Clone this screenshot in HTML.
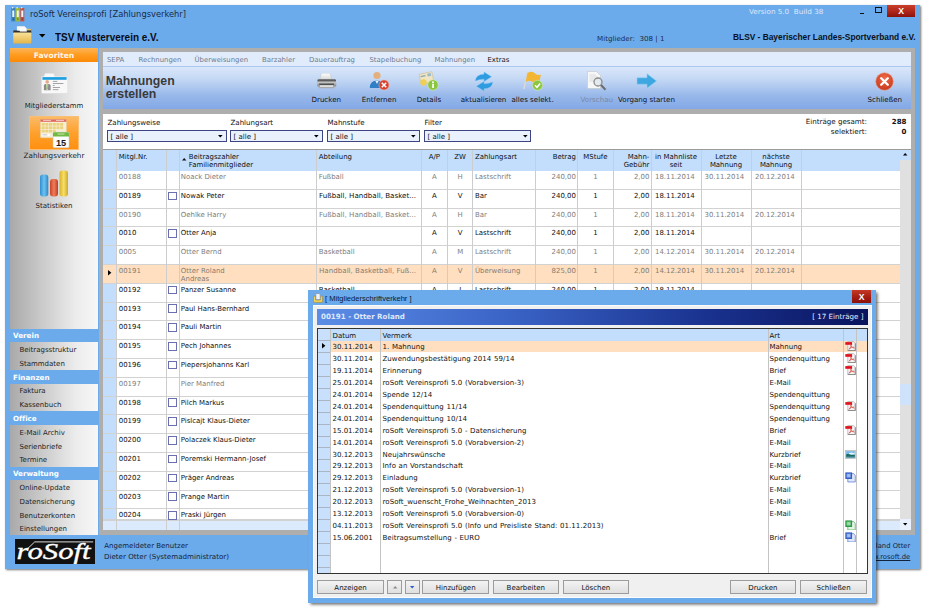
<!DOCTYPE html>
<html lang="de"><head><meta charset="utf-8"><title>roSoft Vereinsprofi [Zahlungsverkehr]</title>
<style>
html,body{margin:0;padding:0;background:#fff;}
body{width:926px;height:610px;position:relative;overflow:hidden;font-family:'DejaVu Sans','Liberation Sans',sans-serif;font-size:7.2px;color:#111;}
div,span{box-sizing:border-box;}
.abs{position:absolute;white-space:pre;}
#win{position:absolute;left:5px;top:5px;width:915.4px;height:563.6px;background:#6babeb;box-shadow:1px 1px 2px rgba(0,0,0,.55);}
.t{position:absolute;white-space:pre;line-height:1;font-variant-ligatures:none;}
.side{position:absolute;left:10px;top:48px;width:88px;height:487px;background:linear-gradient(90deg,#a9a9a9 0%,#c9c9c9 35%,#ececec 75%,#f7f7f7 100%);}
.shdr{position:absolute;left:10px;width:88px;background:#6babeb;color:#fff;font-weight:bold;font-size:7.6px;padding-left:3px;white-space:pre;}
.sitem{position:absolute;left:19px;font-size:7.2px;color:#222;white-space:pre;line-height:1;}
.cell{position:absolute;white-space:pre;overflow:hidden;line-height:1;}
</style></head>
<body>
<div id="win"></div>
<svg class="abs" style="left:11px;top:7px" width="14" height="15" viewBox="0 0 14 15">
<rect x="0.3" y="1" width="4" height="13.4" fill="#3b82bd"/><rect x="1.3" y="3.5" width="2" height="6.5" fill="#f4f4f4"/><rect x="1" y="0" width="1.2" height="1.4" fill="#e8f0f8"/>
<rect x="4.8" y="1" width="4" height="13.4" fill="#9ab93a"/><rect x="5.8" y="3.5" width="2" height="6.5" fill="#f4f4f4"/><rect x="5.5" y="0" width="1.2" height="1.4" fill="#e8f0f8"/>
<rect x="9.3" y="1" width="4" height="13.4" fill="#c9503a"/><rect x="10.3" y="3.5" width="2" height="6.5" fill="#f4f4f4"/><rect x="10" y="0" width="1.2" height="1.4" fill="#e8f0f8"/>
<circle cx="2.3" cy="12" r="0.6" fill="#234"/><circle cx="6.8" cy="12" r="0.6" fill="#342"/><circle cx="11.3" cy="12" r="0.6" fill="#422"/>
</svg>
<div class="t" style="left:30px;top:10.20px;font-size:8.0px;color:#1a2a44;line-height:9.60px;transform:scaleX(1.0389);transform-origin:left center;">roSoft Vereinsprofi [Zahlungsverkehr]</div>
<div class="t" style="left:749px;top:8.30px;font-size:7.0px;color:#dbe9fb;line-height:8.40px;transform:scaleX(1.0282);transform-origin:left center;">Version 5.0  Build 38</div>
<div class="abs" style="left:859.8px;top:12.9px;width:4.6px;height:1.5px;background:#111;"></div>
<div class="abs" style="left:875px;top:7px;width:7px;height:6px;background:transparent;border:1px solid #111;border-top-width:1.6px;"></div>
<div class="abs" style="left:887px;top:5px;width:28px;height:12px;background:linear-gradient(#c8402a,#b52a1c 45%,#8c120c);"></div>
<div class="t" style="left:887px;top:6.04px;font-size:8.6px;color:#fff;line-height:10.32px;font-weight:bold;font-family:'Liberation Sans',sans-serif;width:28px;text-align:center;">X</div>
<svg class="abs" style="left:12.5px;top:26px" width="19" height="18" viewBox="0 0 19 18">
<defs><linearGradient id="fg" x1="0" y1="0" x2="0" y2="1"><stop offset="0" stop-color="#f8e29a"/><stop offset="1" stop-color="#e6b54a"/></linearGradient></defs>
<rect x="13.6" y="2.8" width="4.2" height="3" fill="#e8c058"/>
<path d="M0.4 4.4 H18.2 V7.2 H0.4Z" fill="#2e2e2e"/>
<path d="M4 0.3 H11.4 L13.7 2.6 V5.6 H7.2 L6.2 4.4 H4Z" fill="#fbfbfb" stroke="#dcdcdc" stroke-width="0.3"/>
<rect x="0.3" y="6.4" width="18" height="11" rx="0.8" fill="url(#fg)"/>
</svg>
<svg class="abs" style="left:39px;top:33.9px" width="7" height="4" viewBox="0 0 7 4"><path d="M0 0H6.4L3.2 3.4Z" fill="#000"/></svg>
<div class="t" style="left:54.7px;top:29.68px;font-size:11.7px;color:#0a0a12;line-height:14.04px;font-weight:bold;font-family:'Liberation Sans',sans-serif;transform:scaleX(0.8504);transform-origin:left center;">TSV Musterverein e.V.</div>
<div class="t" style="left:596.7px;top:34.96px;font-size:6.9px;color:#1c2d4a;line-height:8.28px;transform:scaleX(1.0340);transform-origin:left center;">Mitglieder:  308 | 1</div>
<div class="t" style="left:732.8px;top:32.18px;font-size:8.7px;color:#0a1020;line-height:10.44px;font-weight:bold;font-family:'Liberation Sans',sans-serif;transform:scaleX(0.9610);transform-origin:left center;">BLSV - Bayerischer Landes-Sportverband e.V.</div>
<div class="side"></div>
<div class="abs" style="left:10px;top:48px;width:88px;height:13.5px;background:linear-gradient(#fbb558,#ff9b1e 50%,#fb8a07);"></div>
<div class="t" style="left:10px;top:50.64px;font-size:7.6px;color:#fff6e6;line-height:9.12px;font-weight:bold;width:88px;text-align:center;">Favoriten</div>
<svg class="abs" style="left:40.5px;top:73px" width="27.5" height="21" viewBox="0 0 27.5 21">
<path d="M0.4 4.6 Q0.4 3.3 1.7 3.3 L3 3.3 L3.6 0.9 Q3.8 0.2 4.6 0.2 L12.2 0.2 Q13 0.2 13.2 0.9 L13.8 3.3 L25.5 3.3 Q26.8 3.3 26.8 4.6 L26.8 19.3 Q26.8 20.6 25.5 20.6 L1.7 20.6 Q0.4 20.6 0.4 19.3Z" fill="#f8f8f8" stroke="#d4d4d4" stroke-width="0.5"/>
<rect x="1.4" y="4.1" width="24.2" height="2.7" fill="#1f9fe0"/>
<circle cx="6.2" cy="8.9" r="1.8" fill="#eaa88a"/>
<path d="M2.9 17.2 V12.6 Q2.9 10.9 4.6 10.9 H7.8 Q9.6 10.9 9.6 12.6 V17.2Z" fill="#8c8c8c"/>
<path d="M5.2 10.9 H7.2 L6.9 16.8 H5.5Z" fill="#f4f4f4"/>
<path d="M5.7 11.1 H6.7 L6.9 15.4 L6.2 16.4 L5.5 15.4Z" fill="#8cc63f"/>
<g fill="#8f8f8f"><rect x="11.8" y="7.9" width="4.5" height="0.8"/><rect x="11.8" y="10" width="10.6" height="0.8"/><rect x="11.8" y="12.1" width="1.8" height="0.8"/><rect x="11.8" y="14.1" width="7.2" height="0.8"/><rect x="11.8" y="16.3" width="5.6" height="0.8"/></g>
</svg>
<div class="t" style="left:10px;top:101.50px;font-size:7.0px;color:#222;line-height:8.40px;width:88px;text-align:center;transform:scaleX(0.9877);transform-origin:center center;">Mitgliederstamm</div>
<div class="abs" style="left:29.4px;top:116.3px;width:49.4px;height:33.7px;background:linear-gradient(#fbba66,#ffa02c 50%,#ff9010);border:1px solid #f9bd74;"></div>
<svg class="abs" style="left:39.5px;top:119.2px" width="30" height="30" viewBox="0 0 30 30">
<rect x="0.4" y="0.4" width="26" height="18.4" rx="0.8" fill="#f6efd6" stroke="#dccfa6" stroke-width="0.5"/>
<rect x="0.4" y="0.4" width="26" height="2.4" fill="#e0695a"/>
<rect x="3" y="0.9" width="8" height="1" fill="#f5c9c0"/><rect x="16" y="0.9" width="8" height="1" fill="#f5c9c0"/>
<g fill="#ecd27c">
<rect x="1.6" y="4" width="3.1" height="2.7"/><rect x="5.3" y="4" width="3.1" height="2.7"/><rect x="9" y="4" width="3.1" height="2.7"/><rect x="12.7" y="4" width="3.1" height="2.7"/><rect x="16.4" y="4" width="3.1" height="2.7"/><rect x="20.1" y="4" width="3.1" height="2.7"/>
<rect x="1.6" y="7.4" width="3.1" height="2.7"/><rect x="5.3" y="7.4" width="3.1" height="2.7"/><rect x="9" y="7.4" width="3.1" height="2.7"/><rect x="12.7" y="7.4" width="3.1" height="2.7"/><rect x="16.4" y="7.4" width="3.1" height="2.7"/><rect x="20.1" y="7.4" width="3.1" height="2.7"/>
<rect x="1.6" y="10.8" width="3.1" height="2.7"/><rect x="5.3" y="10.8" width="3.1" height="2.7"/><rect x="9" y="10.8" width="3.1" height="2.7"/><rect x="12.7" y="10.8" width="3.1" height="2.7"/>
</g>
<rect x="1.6" y="14.8" width="8" height="2.2" fill="#fff"/><rect x="2.4" y="15.6" width="5" height="0.6" fill="#999"/>
<rect x="13" y="13.3" width="16" height="15.4" rx="1.2" fill="#fdfdfd" stroke="#c4c4c4" stroke-width="0.5"/>
<path d="M13 17.6 V14.5 Q13 13.3 14.2 13.3 H27.8 Q29 13.3 29 14.5 V17.6Z" fill="#72b944"/>
<rect x="17.5" y="14.6" width="7" height="0.9" fill="#cfe8b8"/>
<text x="21" y="26.6" font-family="Liberation Sans, sans-serif" font-weight="bold" font-size="9.2" text-anchor="middle" fill="#1a1a1a">15</text>
</svg>
<div class="t" style="left:5.5px;top:151.68px;font-size:7.2px;color:#222;line-height:8.64px;width:96px;text-align:center;transform:scaleX(1.0003);transform-origin:center center;">Zahlungsverkehr</div>
<svg class="abs" style="left:38px;top:170px" width="32" height="27" viewBox="0 0 32 27">
<defs>
<linearGradient id="b1" x1="0" x2="1"><stop offset="0" stop-color="#2f8fd0"/><stop offset=".5" stop-color="#6cc3f1"/><stop offset="1" stop-color="#2f86c8"/></linearGradient>
<linearGradient id="b2" x1="0" x2="1"><stop offset="0" stop-color="#c9442a"/><stop offset=".5" stop-color="#ef7e58"/><stop offset="1" stop-color="#c23a22"/></linearGradient>
<linearGradient id="b3" x1="0" x2="1"><stop offset="0" stop-color="#d9b22a"/><stop offset=".5" stop-color="#f6df6a"/><stop offset="1" stop-color="#d2a820"/></linearGradient>
</defs>
<rect x="2" y="4.6" width="8.3" height="21.9" rx="3" fill="url(#b1)"/>
<rect x="12" y="9" width="8" height="17.5" rx="3" fill="url(#b2)"/>
<rect x="21.5" y="0.4" width="8.5" height="26.1" rx="3" fill="url(#b3)"/>
</svg>
<div class="t" style="left:10px;top:201.50px;font-size:7.0px;color:#222;line-height:8.40px;width:88px;text-align:center;">Statistiken</div>
<div class="abs" style="left:5px;top:328.5px;width:93px;height:13.8px;background:#6babeb;"></div>
<div class="t" style="left:13.3px;top:332.44px;font-size:7.1px;color:#fff;line-height:8.52px;font-weight:bold;transform:scaleX(1.0109);transform-origin:left center;">Verein</div>
<div class="t" style="left:19.5px;top:345.90px;font-size:7.0px;color:#1e1e1e;line-height:8.40px;">Beitragsstruktur</div>
<div class="t" style="left:19.5px;top:359.70px;font-size:7.0px;color:#1e1e1e;line-height:8.40px;">Stammdaten</div>
<div class="abs" style="left:5px;top:369.9px;width:93px;height:13.8px;background:#6babeb;"></div>
<div class="t" style="left:13.3px;top:373.84px;font-size:7.1px;color:#fff;line-height:8.52px;font-weight:bold;transform:scaleX(1.0123);transform-origin:left center;">Finanzen</div>
<div class="t" style="left:19.5px;top:387.30px;font-size:7.0px;color:#1e1e1e;line-height:8.40px;">Faktura</div>
<div class="t" style="left:19.5px;top:401.10px;font-size:7.0px;color:#1e1e1e;line-height:8.40px;">Kassenbuch</div>
<div class="abs" style="left:5px;top:411.3px;width:93px;height:13.8px;background:#6babeb;"></div>
<div class="t" style="left:13.3px;top:415.24px;font-size:7.1px;color:#fff;line-height:8.52px;font-weight:bold;transform:scaleX(0.9976);transform-origin:left center;">Office</div>
<div class="t" style="left:19.5px;top:428.70px;font-size:7.0px;color:#1e1e1e;line-height:8.40px;">E-Mail Archiv</div>
<div class="t" style="left:19.5px;top:442.50px;font-size:7.0px;color:#1e1e1e;line-height:8.40px;">Serienbriefe</div>
<div class="t" style="left:19.5px;top:456.30px;font-size:7.0px;color:#1e1e1e;line-height:8.40px;">Termine</div>
<div class="abs" style="left:5px;top:466.5px;width:93px;height:13.8px;background:#6babeb;"></div>
<div class="t" style="left:13.3px;top:470.44px;font-size:7.1px;color:#fff;line-height:8.52px;font-weight:bold;transform:scaleX(1.0008);transform-origin:left center;">Verwaltung</div>
<div class="t" style="left:19.5px;top:483.90px;font-size:7.0px;color:#1e1e1e;line-height:8.40px;">Online-Update</div>
<div class="t" style="left:19.5px;top:497.70px;font-size:7.0px;color:#1e1e1e;line-height:8.40px;">Datensicherung</div>
<div class="t" style="left:19.5px;top:511.50px;font-size:7.0px;color:#1e1e1e;line-height:8.40px;">Benutzerkonten</div>
<div class="t" style="left:19.5px;top:525.30px;font-size:7.0px;color:#1e1e1e;line-height:8.40px;">Einstellungen</div>
<div class="abs" style="left:99px;top:48px;width:816px;height:487.4px;background:#aeaeae;"></div>
<div class="abs" style="left:102.5px;top:52px;width:808px;height:14.8px;background:#e0ecfb;border-bottom:1px solid #a9c7f1;"></div>
<div class="t" style="left:107px;top:56.06px;font-size:6.9px;color:#6d7b90;line-height:8.28px;">SEPA</div>
<div class="t" style="left:138.5px;top:56.06px;font-size:6.9px;color:#6d7b90;line-height:8.28px;">Rechnungen</div>
<div class="t" style="left:194.5px;top:56.06px;font-size:6.9px;color:#6d7b90;line-height:8.28px;">Überweisungen</div>
<div class="t" style="left:262px;top:56.06px;font-size:6.9px;color:#6d7b90;line-height:8.28px;">Barzahler</div>
<div class="t" style="left:309px;top:56.06px;font-size:6.9px;color:#6d7b90;line-height:8.28px;">Dauerauftrag</div>
<div class="t" style="left:369.5px;top:56.06px;font-size:6.9px;color:#6d7b90;line-height:8.28px;">Stapelbuchung</div>
<div class="t" style="left:434.5px;top:56.06px;font-size:6.9px;color:#6d7b90;line-height:8.28px;">Mahnungen</div>
<div class="t" style="left:487.5px;top:56.06px;font-size:6.9px;color:#111;line-height:8.28px;">Extras</div>
<div class="abs" style="left:102.5px;top:66.8px;width:808px;height:41.9px;background:linear-gradient(#dae7fa 0%,#c3d7f4 30%,#98b8ea 68%,#82a8e5 100%);"></div>
<div class="t" style="left:105.7px;top:73.72px;font-size:12.3px;color:#3a3a3a;line-height:14.76px;font-weight:bold;font-family:'Liberation Sans',sans-serif;">Mahnungen</div>
<div class="t" style="left:105.7px;top:87.32px;font-size:12.3px;color:#3a3a3a;line-height:14.76px;font-weight:bold;font-family:'Liberation Sans',sans-serif;">erstellen</div>
<svg class="abs" style="left:317px;top:73px" width="20" height="16" viewBox="0 0 20 16">
<defs><linearGradient id="pg" x1="0" y1="0" x2="0" y2="1"><stop offset="0" stop-color="#d2d2d2"/><stop offset="1" stop-color="#858585"/></linearGradient>
<linearGradient id="pp" x1="0" y1="0" x2="0" y2="1"><stop offset="0" stop-color="#ffffff"/><stop offset="1" stop-color="#d4d4d4"/></linearGradient></defs>
<path d="M4.4 0.3 H13 L14.8 6.8 H2.8Z" fill="url(#pp)" stroke="#bdbdbd" stroke-width="0.4"/>
<rect x="0.4" y="6.2" width="18.6" height="3" rx="1.2" fill="#5c5c5c"/>
<rect x="0.1" y="8.4" width="19.2" height="5.2" rx="1" fill="url(#pg)"/>
<rect x="2.2" y="10.6" width="14.8" height="1.2" fill="#3e3e3e"/>
<path d="M2 12.6 H17 L17.6 15.3 H1.4Z" fill="#a9a9a9"/>
<rect x="3" y="12.3" width="13" height="1.6" fill="#e4e4e4"/>
</svg>
<div class="t" style="left:311.5px;top:95.94px;font-size:7.1px;color:#111;line-height:8.52px;">Drucken</div>
<svg class="abs" style="left:369px;top:71px" width="22" height="20" viewBox="0 0 22 20">
<circle cx="8" cy="4.5" r="3.6" fill="#e3b07c"/>
<path d="M0.8 17 Q0.8 9.5 8 9.5 Q15.2 9.5 15.2 17Z" fill="#2f7fc7"/>
<path d="M6.3 9.7 L8 13 L9.7 9.7Z" fill="#f2f2f2"/>
<circle cx="15" cy="14" r="5" fill="#d9412b" stroke="#f1b0a0" stroke-width="0.6"/>
<path d="M12.8 11.8 L17.2 16.2 M17.2 11.8 L12.8 16.2" stroke="#fff" stroke-width="1.6"/>
</svg>
<div class="t" style="left:361.7px;top:95.94px;font-size:7.1px;color:#111;line-height:8.52px;">Entfernen</div>
<svg class="abs" style="left:418px;top:71px" width="22" height="20" viewBox="0 0 22 20">
<rect x="2" y="2" width="13" height="10" transform="rotate(-12 8 7)" fill="#efe4c4" stroke="#c9b98c" stroke-width="0.5"/>
<rect x="3" y="4" width="5" height="1.2" transform="rotate(-12 8 7)" fill="#8aa"/>
<rect x="10" y="3" width="3.6" height="3" transform="rotate(-12 8 7)" fill="#9bc"/>
<circle cx="5.5" cy="11.5" r="3.2" fill="#f0cf55"/>
<circle cx="15" cy="14" r="5.2" fill="#8cc63f" stroke="#d7edb2" stroke-width="0.6"/>
<rect x="14.2" y="12.8" width="1.7" height="4.2" fill="#fff"/><circle cx="15" cy="11.2" r="1" fill="#fff"/>
</svg>
<div class="t" style="left:416.7px;top:95.94px;font-size:7.1px;color:#111;line-height:8.52px;">Details</div>
<svg class="abs" style="left:474px;top:72px" width="20" height="19" viewBox="0 0 20 19">
<path d="M1.2 9 Q2 2.2 10 2.2 L10 0 L17.5 4.8 L10 9.6 L10 7.2 Q5.5 7 1.2 9Z" fill="#2f9be0" stroke="#7cc4f0" stroke-width="0.4"/>
<path d="M18.8 10 Q18 16.8 10 16.8 L10 19 L2.5 14.2 L10 9.4 L10 11.8 Q14.5 12 18.8 10Z" fill="#2f9be0" stroke="#7cc4f0" stroke-width="0.4"/>
</svg>
<div class="t" style="left:460.7px;top:95.94px;font-size:7.1px;color:#111;line-height:8.52px;">aktualisieren</div>
<svg class="abs" style="left:522px;top:71px" width="22" height="20" viewBox="0 0 22 20">
<path d="M5.5 1.5 L1.8 18" stroke="#d8d8d8" stroke-width="1.6"/>
<path d="M5.5 2 Q10 -0.5 13 2.5 Q16 5 19 3.5 L17 12 Q13.5 13.5 10.5 11 Q7.5 8.5 3.6 11Z" fill="#f2b534"/>
<circle cx="15.5" cy="14.3" r="5" fill="#8cc63f" stroke="#d7edb2" stroke-width="0.6"/>
<path d="M13 14.3 L15 16.3 L18.2 12.4" stroke="#fff" stroke-width="1.5" fill="none"/>
</svg>
<div class="t" style="left:511.5px;top:95.94px;font-size:7.1px;color:#111;line-height:8.52px;">alles selekt.</div>
<svg class="abs" style="left:586px;top:71px" width="22" height="21" viewBox="0 0 22 21">
<path d="M1.5 0.5 L10.5 0.5 L14.5 4.5 L14.5 17.5 L1.5 17.5Z" fill="#f7f7f7" stroke="#c4c4c4" stroke-width="0.6"/>
<path d="M3.5 4H10M3.5 6H12M3.5 8H12M3.5 10H8" stroke="#cfcfcf" stroke-width="0.7"/>
<circle cx="12" cy="11" r="4" fill="#dfe7ee" fill-opacity=".8" stroke="#8d8d8d" stroke-width="1.3"/>
<path d="M15 14 L19.5 18.8" stroke="#6d6d6d" stroke-width="2"/>
</svg>
<div class="t" style="left:580.5px;top:95.94px;font-size:7.1px;color:#7c89a3;line-height:8.52px;">Vorschau</div>
<svg class="abs" style="left:636px;top:73px" width="22" height="16" viewBox="0 0 22 16">
<path d="M1 4.8 L11 4.8 L11 0.8 L20.5 8 L11 15.2 L11 11.2 L1 11.2Z" fill="#3ea6e0" stroke="#8fd0f3" stroke-width="0.6"/>
</svg>
<div class="t" style="left:618px;top:95.94px;font-size:7.1px;color:#111;line-height:8.52px;">Vorgang starten</div>
<svg class="abs" style="left:875px;top:72px" width="19" height="19" viewBox="0 0 19 19">
<defs><radialGradient id="cg" cx=".5" cy=".3" r=".8"><stop offset="0" stop-color="#ef6a45"/><stop offset="1" stop-color="#c2321b"/></radialGradient></defs>
<circle cx="9.5" cy="9.5" r="8.8" fill="url(#cg)" stroke="#e7a08c" stroke-width="0.6"/>
<path d="M6.2 6.2 L12.8 12.8 M12.8 6.2 L6.2 12.8" stroke="#fff" stroke-width="2.3" stroke-linecap="round"/>
</svg>
<div class="t" style="left:867.5px;top:95.94px;font-size:7.1px;color:#111;line-height:8.52px;">Schließen</div>
<div class="abs" style="left:102.5px;top:113.5px;width:808px;height:35px;background:#fff;"></div>
<div class="t" style="left:107.5px;top:118.97px;font-size:7.05px;color:#111;line-height:8.46px;">Zahlungsweise</div>
<div class="t" style="left:230.5px;top:118.97px;font-size:7.05px;color:#111;line-height:8.46px;">Zahlungsart</div>
<div class="t" style="left:327.5px;top:118.97px;font-size:7.05px;color:#111;line-height:8.46px;">Mahnstufe</div>
<div class="t" style="left:424.5px;top:118.97px;font-size:7.05px;color:#111;line-height:8.46px;">Filter</div>
<div class="abs" style="left:107px;top:129.8px;width:119.5px;height:12.6px;background:#e9f1fd;border:1px solid #3d4484;"></div>
<div class="t" style="left:110.5px;top:132.97px;font-size:7.05px;color:#111;line-height:8.46px;">[ alle ]</div>
<svg class="abs" style="left:218.0px;top:134.5px" width="5" height="3" viewBox="0 0 5 3"><path d="M0 0H4.6L2.3 2.6Z" fill="#000"/></svg>
<div class="abs" style="left:230px;top:129.8px;width:92.5px;height:12.6px;background:#e9f1fd;border:1px solid #3d4484;"></div>
<div class="t" style="left:233.5px;top:132.97px;font-size:7.05px;color:#111;line-height:8.46px;">[ alle ]</div>
<svg class="abs" style="left:314.0px;top:134.5px" width="5" height="3" viewBox="0 0 5 3"><path d="M0 0H4.6L2.3 2.6Z" fill="#000"/></svg>
<div class="abs" style="left:327px;top:129.8px;width:92.5px;height:12.6px;background:#e9f1fd;border:1px solid #3d4484;"></div>
<div class="t" style="left:330.5px;top:132.97px;font-size:7.05px;color:#111;line-height:8.46px;">[ alle ]</div>
<svg class="abs" style="left:411.0px;top:134.5px" width="5" height="3" viewBox="0 0 5 3"><path d="M0 0H4.6L2.3 2.6Z" fill="#000"/></svg>
<div class="abs" style="left:424px;top:129.8px;width:107px;height:12.6px;background:#e9f1fd;border:1px solid #3d4484;"></div>
<div class="t" style="left:427.5px;top:132.97px;font-size:7.05px;color:#111;line-height:8.46px;">[ alle ]</div>
<svg class="abs" style="left:522.5px;top:134.5px" width="5" height="3" viewBox="0 0 5 3"><path d="M0 0H4.6L2.3 2.6Z" fill="#000"/></svg>
<div class="t" style="left:798.5px;top:117.87px;font-size:7.05px;color:#111;line-height:8.46px;width:68px;text-align:right;transform:scaleX(1.0096);transform-origin:right center;">Einträge gesamt:</div>
<div class="t" style="left:798.5px;top:127.87px;font-size:7.05px;color:#111;line-height:8.46px;width:68px;text-align:right;transform:scaleX(1.0230);transform-origin:right center;">selektiert:</div>
<div class="t" style="left:880px;top:117.87px;font-size:7.05px;color:#111;line-height:8.46px;font-weight:bold;width:26.5px;text-align:right;">288</div>
<div class="t" style="left:880px;top:127.87px;font-size:7.05px;color:#111;line-height:8.46px;font-weight:bold;width:26.5px;text-align:right;">0</div>
<div class="abs" style="left:102.5px;top:148.5px;width:808px;height:22.0px;background:#c2defc;border-top:1px solid #9a9a9a;"></div>
<div class="abs" style="left:102.5px;top:170.5px;width:797px;height:359.5px;background:#fff;"></div>
<div class="abs" style="left:102.5px;top:170.5px;width:14px;height:359.5px;background:#c2defc;"></div>
<div class="abs" style="left:102.5px;top:188.8px;width:797px;height:1px;background:#d2d2d2;"></div>
<div class="t" style="left:118.8px;top:172.93px;font-size:6.95px;color:#7e7e7e;line-height:8.34px;">00188</div>
<div class="t" style="left:180.8px;top:172.93px;font-size:6.95px;color:#7e7e7e;line-height:8.34px;">Noack Dieter</div>
<div class="t" style="left:318.8px;top:172.93px;font-size:6.95px;color:#7e7e7e;line-height:8.34px;">Fußball</div>
<div class="t" style="left:421.2px;top:172.93px;font-size:6.95px;color:#7e7e7e;line-height:8.34px;width:26.3px;text-align:center;">A</div>
<div class="t" style="left:447.5px;top:172.93px;font-size:6.95px;color:#7e7e7e;line-height:8.34px;width:25.3px;text-align:center;">H</div>
<div class="t" style="left:475px;top:172.93px;font-size:6.95px;color:#7e7e7e;line-height:8.34px;">Lastschrift</div>
<div class="t" style="left:535.4px;top:172.93px;font-size:6.95px;color:#7e7e7e;line-height:8.34px;width:40.5px;text-align:right;">240,00</div>
<div class="t" style="left:577.4px;top:172.93px;font-size:6.95px;color:#7e7e7e;line-height:8.34px;width:36px;text-align:center;">1</div>
<div class="t" style="left:613.4px;top:172.93px;font-size:6.95px;color:#7e7e7e;line-height:8.34px;width:36px;text-align:right;">2,00</div>
<div class="t" style="left:655px;top:172.93px;font-size:6.95px;color:#7e7e7e;line-height:8.34px;">18.11.2014</div>
<div class="t" style="left:704.5px;top:172.93px;font-size:6.95px;color:#7e7e7e;line-height:8.34px;">30.11.2014</div>
<div class="t" style="left:755px;top:172.93px;font-size:6.95px;color:#7e7e7e;line-height:8.34px;">20.12.2014</div>
<div class="abs" style="left:102.5px;top:207.60000000000002px;width:797px;height:1px;background:#d2d2d2;"></div>
<div class="t" style="left:118.8px;top:191.73px;font-size:6.95px;color:#111;line-height:8.34px;">00189</div>
<div class="abs" style="left:168.2px;top:191.60000000000002px;width:8.6px;height:8.6px;background:#fff;border:1px solid #6a6fb0;"></div>
<div class="t" style="left:180.8px;top:191.73px;font-size:6.95px;color:#111;line-height:8.34px;">Nowak Peter</div>
<div class="t" style="left:318.8px;top:191.73px;font-size:6.95px;color:#111;line-height:8.34px;transform:scaleX(1.0265);transform-origin:left center;">Fußball, Handball, Basket...</div>
<div class="t" style="left:421.2px;top:191.73px;font-size:6.95px;color:#111;line-height:8.34px;width:26.3px;text-align:center;">A</div>
<div class="t" style="left:447.5px;top:191.73px;font-size:6.95px;color:#111;line-height:8.34px;width:25.3px;text-align:center;">V</div>
<div class="t" style="left:475px;top:191.73px;font-size:6.95px;color:#111;line-height:8.34px;">Bar</div>
<div class="t" style="left:535.4px;top:191.73px;font-size:6.95px;color:#111;line-height:8.34px;width:40.5px;text-align:right;">240,00</div>
<div class="t" style="left:577.4px;top:191.73px;font-size:6.95px;color:#111;line-height:8.34px;width:36px;text-align:center;">1</div>
<div class="t" style="left:613.4px;top:191.73px;font-size:6.95px;color:#111;line-height:8.34px;width:36px;text-align:right;">2,00</div>
<div class="t" style="left:655px;top:191.73px;font-size:6.95px;color:#111;line-height:8.34px;">18.11.2014</div>
<div class="t" style="left:704.5px;top:191.73px;font-size:6.95px;color:#111;line-height:8.34px;"></div>
<div class="t" style="left:755px;top:191.73px;font-size:6.95px;color:#111;line-height:8.34px;"></div>
<div class="abs" style="left:102.5px;top:226.4px;width:797px;height:1px;background:#d2d2d2;"></div>
<div class="t" style="left:118.8px;top:210.53px;font-size:6.95px;color:#7e7e7e;line-height:8.34px;">00190</div>
<div class="t" style="left:180.8px;top:210.53px;font-size:6.95px;color:#7e7e7e;line-height:8.34px;">Oehlke Harry</div>
<div class="t" style="left:318.8px;top:210.53px;font-size:6.95px;color:#7e7e7e;line-height:8.34px;transform:scaleX(1.0265);transform-origin:left center;">Fußball, Handball, Basket...</div>
<div class="t" style="left:421.2px;top:210.53px;font-size:6.95px;color:#7e7e7e;line-height:8.34px;width:26.3px;text-align:center;">A</div>
<div class="t" style="left:447.5px;top:210.53px;font-size:6.95px;color:#7e7e7e;line-height:8.34px;width:25.3px;text-align:center;">H</div>
<div class="t" style="left:475px;top:210.53px;font-size:6.95px;color:#7e7e7e;line-height:8.34px;">Bar</div>
<div class="t" style="left:535.4px;top:210.53px;font-size:6.95px;color:#7e7e7e;line-height:8.34px;width:40.5px;text-align:right;">240,00</div>
<div class="t" style="left:577.4px;top:210.53px;font-size:6.95px;color:#7e7e7e;line-height:8.34px;width:36px;text-align:center;">1</div>
<div class="t" style="left:613.4px;top:210.53px;font-size:6.95px;color:#7e7e7e;line-height:8.34px;width:36px;text-align:right;">2,00</div>
<div class="t" style="left:655px;top:210.53px;font-size:6.95px;color:#7e7e7e;line-height:8.34px;">18.11.2014</div>
<div class="t" style="left:704.5px;top:210.53px;font-size:6.95px;color:#7e7e7e;line-height:8.34px;">30.11.2014</div>
<div class="t" style="left:755px;top:210.53px;font-size:6.95px;color:#7e7e7e;line-height:8.34px;">20.12.2014</div>
<div class="abs" style="left:102.5px;top:245.20000000000002px;width:797px;height:1px;background:#d2d2d2;"></div>
<div class="t" style="left:118.8px;top:229.33px;font-size:6.95px;color:#111;line-height:8.34px;">0010</div>
<div class="abs" style="left:168.2px;top:229.20000000000002px;width:8.6px;height:8.6px;background:#fff;border:1px solid #6a6fb0;"></div>
<div class="t" style="left:180.8px;top:229.33px;font-size:6.95px;color:#111;line-height:8.34px;">Otter Anja</div>
<div class="t" style="left:318.8px;top:229.33px;font-size:6.95px;color:#111;line-height:8.34px;"></div>
<div class="t" style="left:421.2px;top:229.33px;font-size:6.95px;color:#111;line-height:8.34px;width:26.3px;text-align:center;">A</div>
<div class="t" style="left:447.5px;top:229.33px;font-size:6.95px;color:#111;line-height:8.34px;width:25.3px;text-align:center;">V</div>
<div class="t" style="left:475px;top:229.33px;font-size:6.95px;color:#111;line-height:8.34px;">Lastschrift</div>
<div class="t" style="left:535.4px;top:229.33px;font-size:6.95px;color:#111;line-height:8.34px;width:40.5px;text-align:right;">240,00</div>
<div class="t" style="left:577.4px;top:229.33px;font-size:6.95px;color:#111;line-height:8.34px;width:36px;text-align:center;">1</div>
<div class="t" style="left:613.4px;top:229.33px;font-size:6.95px;color:#111;line-height:8.34px;width:36px;text-align:right;">2,00</div>
<div class="t" style="left:655px;top:229.33px;font-size:6.95px;color:#111;line-height:8.34px;">18.11.2014</div>
<div class="t" style="left:704.5px;top:229.33px;font-size:6.95px;color:#111;line-height:8.34px;"></div>
<div class="t" style="left:755px;top:229.33px;font-size:6.95px;color:#111;line-height:8.34px;"></div>
<div class="abs" style="left:102.5px;top:264.0px;width:797px;height:1px;background:#d2d2d2;"></div>
<div class="t" style="left:118.8px;top:248.13px;font-size:6.95px;color:#7e7e7e;line-height:8.34px;">0005</div>
<div class="t" style="left:180.8px;top:248.13px;font-size:6.95px;color:#7e7e7e;line-height:8.34px;">Otter Bernd</div>
<div class="t" style="left:318.8px;top:248.13px;font-size:6.95px;color:#7e7e7e;line-height:8.34px;">Basketball</div>
<div class="t" style="left:421.2px;top:248.13px;font-size:6.95px;color:#7e7e7e;line-height:8.34px;width:26.3px;text-align:center;">A</div>
<div class="t" style="left:447.5px;top:248.13px;font-size:6.95px;color:#7e7e7e;line-height:8.34px;width:25.3px;text-align:center;">M</div>
<div class="t" style="left:475px;top:248.13px;font-size:6.95px;color:#7e7e7e;line-height:8.34px;">Lastschrift</div>
<div class="t" style="left:535.4px;top:248.13px;font-size:6.95px;color:#7e7e7e;line-height:8.34px;width:40.5px;text-align:right;">240,00</div>
<div class="t" style="left:577.4px;top:248.13px;font-size:6.95px;color:#7e7e7e;line-height:8.34px;width:36px;text-align:center;">1</div>
<div class="t" style="left:613.4px;top:248.13px;font-size:6.95px;color:#7e7e7e;line-height:8.34px;width:36px;text-align:right;">2,00</div>
<div class="t" style="left:655px;top:248.13px;font-size:6.95px;color:#7e7e7e;line-height:8.34px;">14.12.2014</div>
<div class="t" style="left:704.5px;top:248.13px;font-size:6.95px;color:#7e7e7e;line-height:8.34px;">30.11.2014</div>
<div class="t" style="left:755px;top:248.13px;font-size:6.95px;color:#7e7e7e;line-height:8.34px;">20.12.2014</div>
<div class="abs" style="left:102.5px;top:264.5px;width:797px;height:18.8px;background:#ffdfc0;"></div>
<svg class="abs" style="left:107.5px;top:270.3px" width="4" height="6" viewBox="0 0 4 6"><path d="M0 0L3.4 2.8L0 5.6Z" fill="#000"/></svg>
<div class="abs" style="left:102.5px;top:282.8px;width:797px;height:1px;background:#d2d2d2;"></div>
<div class="t" style="left:118.8px;top:266.93px;font-size:6.95px;color:#857c70;line-height:8.34px;">00191</div>
<div class="t" style="left:180.8px;top:266.93px;font-size:6.95px;color:#857c70;line-height:8.34px;">Otter Roland</div>
<div class="t" style="left:180.8px;top:274.83px;font-size:6.95px;color:#857c70;line-height:8.34px;">Andreas</div>
<div class="t" style="left:318.8px;top:266.93px;font-size:6.95px;color:#857c70;line-height:8.34px;transform:scaleX(1.0265);transform-origin:left center;">Handball, Basketball, Fuß...</div>
<div class="t" style="left:421.2px;top:266.93px;font-size:6.95px;color:#857c70;line-height:8.34px;width:26.3px;text-align:center;">A</div>
<div class="t" style="left:447.5px;top:266.93px;font-size:6.95px;color:#857c70;line-height:8.34px;width:25.3px;text-align:center;">V</div>
<div class="t" style="left:475px;top:266.93px;font-size:6.95px;color:#857c70;line-height:8.34px;">Überweisung</div>
<div class="t" style="left:535.4px;top:266.93px;font-size:6.95px;color:#857c70;line-height:8.34px;width:40.5px;text-align:right;">825,00</div>
<div class="t" style="left:577.4px;top:266.93px;font-size:6.95px;color:#857c70;line-height:8.34px;width:36px;text-align:center;">1</div>
<div class="t" style="left:613.4px;top:266.93px;font-size:6.95px;color:#857c70;line-height:8.34px;width:36px;text-align:right;">2,00</div>
<div class="t" style="left:655px;top:266.93px;font-size:6.95px;color:#857c70;line-height:8.34px;">14.12.2014</div>
<div class="t" style="left:704.5px;top:266.93px;font-size:6.95px;color:#857c70;line-height:8.34px;">30.11.2014</div>
<div class="t" style="left:755px;top:266.93px;font-size:6.95px;color:#857c70;line-height:8.34px;">20.12.2014</div>
<div class="abs" style="left:102.5px;top:301.6px;width:797px;height:1px;background:#d2d2d2;"></div>
<div class="t" style="left:118.8px;top:285.73px;font-size:6.95px;color:#111;line-height:8.34px;">00192</div>
<div class="abs" style="left:168.2px;top:285.6px;width:8.6px;height:8.6px;background:#fff;border:1px solid #6a6fb0;"></div>
<div class="t" style="left:180.8px;top:285.73px;font-size:6.95px;color:#111;line-height:8.34px;">Panzer Susanne</div>
<div class="t" style="left:318.8px;top:285.73px;font-size:6.95px;color:#111;line-height:8.34px;">Basketball</div>
<div class="t" style="left:421.2px;top:285.73px;font-size:6.95px;color:#111;line-height:8.34px;width:26.3px;text-align:center;">A</div>
<div class="t" style="left:447.5px;top:285.73px;font-size:6.95px;color:#111;line-height:8.34px;width:25.3px;text-align:center;">J</div>
<div class="t" style="left:475px;top:285.73px;font-size:6.95px;color:#111;line-height:8.34px;">Lastschrift</div>
<div class="t" style="left:535.4px;top:285.73px;font-size:6.95px;color:#111;line-height:8.34px;width:40.5px;text-align:right;">240,00</div>
<div class="t" style="left:577.4px;top:285.73px;font-size:6.95px;color:#111;line-height:8.34px;width:36px;text-align:center;">1</div>
<div class="t" style="left:613.4px;top:285.73px;font-size:6.95px;color:#111;line-height:8.34px;width:36px;text-align:right;">2,00</div>
<div class="t" style="left:655px;top:285.73px;font-size:6.95px;color:#111;line-height:8.34px;">18.11.2014</div>
<div class="t" style="left:704.5px;top:285.73px;font-size:6.95px;color:#111;line-height:8.34px;"></div>
<div class="t" style="left:755px;top:285.73px;font-size:6.95px;color:#111;line-height:8.34px;"></div>
<div class="abs" style="left:102.5px;top:320.40000000000003px;width:797px;height:1px;background:#d2d2d2;"></div>
<div class="t" style="left:118.8px;top:304.53px;font-size:6.95px;color:#111;line-height:8.34px;">00193</div>
<div class="abs" style="left:168.2px;top:304.40000000000003px;width:8.6px;height:8.6px;background:#fff;border:1px solid #6a6fb0;"></div>
<div class="t" style="left:180.8px;top:304.53px;font-size:6.95px;color:#111;line-height:8.34px;">Paul Hans-Bernhard</div>
<div class="t" style="left:318.8px;top:304.53px;font-size:6.95px;color:#111;line-height:8.34px;"></div>
<div class="t" style="left:421.2px;top:304.53px;font-size:6.95px;color:#111;line-height:8.34px;width:26.3px;text-align:center;"></div>
<div class="t" style="left:447.5px;top:304.53px;font-size:6.95px;color:#111;line-height:8.34px;width:25.3px;text-align:center;"></div>
<div class="t" style="left:475px;top:304.53px;font-size:6.95px;color:#111;line-height:8.34px;"></div>
<div class="t" style="left:535.4px;top:304.53px;font-size:6.95px;color:#111;line-height:8.34px;width:40.5px;text-align:right;"></div>
<div class="t" style="left:577.4px;top:304.53px;font-size:6.95px;color:#111;line-height:8.34px;width:36px;text-align:center;"></div>
<div class="t" style="left:613.4px;top:304.53px;font-size:6.95px;color:#111;line-height:8.34px;width:36px;text-align:right;"></div>
<div class="t" style="left:655px;top:304.53px;font-size:6.95px;color:#111;line-height:8.34px;"></div>
<div class="t" style="left:704.5px;top:304.53px;font-size:6.95px;color:#111;line-height:8.34px;"></div>
<div class="t" style="left:755px;top:304.53px;font-size:6.95px;color:#111;line-height:8.34px;"></div>
<div class="abs" style="left:102.5px;top:339.2px;width:797px;height:1px;background:#d2d2d2;"></div>
<div class="t" style="left:118.8px;top:323.33px;font-size:6.95px;color:#111;line-height:8.34px;">00194</div>
<div class="abs" style="left:168.2px;top:323.2px;width:8.6px;height:8.6px;background:#fff;border:1px solid #6a6fb0;"></div>
<div class="t" style="left:180.8px;top:323.33px;font-size:6.95px;color:#111;line-height:8.34px;">Pauli Martin</div>
<div class="t" style="left:318.8px;top:323.33px;font-size:6.95px;color:#111;line-height:8.34px;"></div>
<div class="t" style="left:421.2px;top:323.33px;font-size:6.95px;color:#111;line-height:8.34px;width:26.3px;text-align:center;"></div>
<div class="t" style="left:447.5px;top:323.33px;font-size:6.95px;color:#111;line-height:8.34px;width:25.3px;text-align:center;"></div>
<div class="t" style="left:475px;top:323.33px;font-size:6.95px;color:#111;line-height:8.34px;"></div>
<div class="t" style="left:535.4px;top:323.33px;font-size:6.95px;color:#111;line-height:8.34px;width:40.5px;text-align:right;"></div>
<div class="t" style="left:577.4px;top:323.33px;font-size:6.95px;color:#111;line-height:8.34px;width:36px;text-align:center;"></div>
<div class="t" style="left:613.4px;top:323.33px;font-size:6.95px;color:#111;line-height:8.34px;width:36px;text-align:right;"></div>
<div class="t" style="left:655px;top:323.33px;font-size:6.95px;color:#111;line-height:8.34px;"></div>
<div class="t" style="left:704.5px;top:323.33px;font-size:6.95px;color:#111;line-height:8.34px;"></div>
<div class="t" style="left:755px;top:323.33px;font-size:6.95px;color:#111;line-height:8.34px;"></div>
<div class="abs" style="left:102.5px;top:358.00000000000006px;width:797px;height:1px;background:#d2d2d2;"></div>
<div class="t" style="left:118.8px;top:342.13px;font-size:6.95px;color:#111;line-height:8.34px;">00195</div>
<div class="abs" style="left:168.2px;top:342.00000000000006px;width:8.6px;height:8.6px;background:#fff;border:1px solid #6a6fb0;"></div>
<div class="t" style="left:180.8px;top:342.13px;font-size:6.95px;color:#111;line-height:8.34px;">Pech Johannes</div>
<div class="t" style="left:318.8px;top:342.13px;font-size:6.95px;color:#111;line-height:8.34px;"></div>
<div class="t" style="left:421.2px;top:342.13px;font-size:6.95px;color:#111;line-height:8.34px;width:26.3px;text-align:center;"></div>
<div class="t" style="left:447.5px;top:342.13px;font-size:6.95px;color:#111;line-height:8.34px;width:25.3px;text-align:center;"></div>
<div class="t" style="left:475px;top:342.13px;font-size:6.95px;color:#111;line-height:8.34px;"></div>
<div class="t" style="left:535.4px;top:342.13px;font-size:6.95px;color:#111;line-height:8.34px;width:40.5px;text-align:right;"></div>
<div class="t" style="left:577.4px;top:342.13px;font-size:6.95px;color:#111;line-height:8.34px;width:36px;text-align:center;"></div>
<div class="t" style="left:613.4px;top:342.13px;font-size:6.95px;color:#111;line-height:8.34px;width:36px;text-align:right;"></div>
<div class="t" style="left:655px;top:342.13px;font-size:6.95px;color:#111;line-height:8.34px;"></div>
<div class="t" style="left:704.5px;top:342.13px;font-size:6.95px;color:#111;line-height:8.34px;"></div>
<div class="t" style="left:755px;top:342.13px;font-size:6.95px;color:#111;line-height:8.34px;"></div>
<div class="abs" style="left:102.5px;top:376.8px;width:797px;height:1px;background:#d2d2d2;"></div>
<div class="t" style="left:118.8px;top:360.93px;font-size:6.95px;color:#111;line-height:8.34px;">00196</div>
<div class="abs" style="left:168.2px;top:360.8px;width:8.6px;height:8.6px;background:#fff;border:1px solid #6a6fb0;"></div>
<div class="t" style="left:180.8px;top:360.93px;font-size:6.95px;color:#111;line-height:8.34px;">Piepersjohanns Karl</div>
<div class="t" style="left:318.8px;top:360.93px;font-size:6.95px;color:#111;line-height:8.34px;"></div>
<div class="t" style="left:421.2px;top:360.93px;font-size:6.95px;color:#111;line-height:8.34px;width:26.3px;text-align:center;"></div>
<div class="t" style="left:447.5px;top:360.93px;font-size:6.95px;color:#111;line-height:8.34px;width:25.3px;text-align:center;"></div>
<div class="t" style="left:475px;top:360.93px;font-size:6.95px;color:#111;line-height:8.34px;"></div>
<div class="t" style="left:535.4px;top:360.93px;font-size:6.95px;color:#111;line-height:8.34px;width:40.5px;text-align:right;"></div>
<div class="t" style="left:577.4px;top:360.93px;font-size:6.95px;color:#111;line-height:8.34px;width:36px;text-align:center;"></div>
<div class="t" style="left:613.4px;top:360.93px;font-size:6.95px;color:#111;line-height:8.34px;width:36px;text-align:right;"></div>
<div class="t" style="left:655px;top:360.93px;font-size:6.95px;color:#111;line-height:8.34px;"></div>
<div class="t" style="left:704.5px;top:360.93px;font-size:6.95px;color:#111;line-height:8.34px;"></div>
<div class="t" style="left:755px;top:360.93px;font-size:6.95px;color:#111;line-height:8.34px;"></div>
<div class="abs" style="left:102.5px;top:395.6px;width:797px;height:1px;background:#d2d2d2;"></div>
<div class="t" style="left:118.8px;top:379.73px;font-size:6.95px;color:#7e7e7e;line-height:8.34px;">00197</div>
<div class="t" style="left:180.8px;top:379.73px;font-size:6.95px;color:#7e7e7e;line-height:8.34px;">Pier Manfred</div>
<div class="t" style="left:318.8px;top:379.73px;font-size:6.95px;color:#7e7e7e;line-height:8.34px;"></div>
<div class="t" style="left:421.2px;top:379.73px;font-size:6.95px;color:#7e7e7e;line-height:8.34px;width:26.3px;text-align:center;"></div>
<div class="t" style="left:447.5px;top:379.73px;font-size:6.95px;color:#7e7e7e;line-height:8.34px;width:25.3px;text-align:center;"></div>
<div class="t" style="left:475px;top:379.73px;font-size:6.95px;color:#7e7e7e;line-height:8.34px;"></div>
<div class="t" style="left:535.4px;top:379.73px;font-size:6.95px;color:#7e7e7e;line-height:8.34px;width:40.5px;text-align:right;"></div>
<div class="t" style="left:577.4px;top:379.73px;font-size:6.95px;color:#7e7e7e;line-height:8.34px;width:36px;text-align:center;"></div>
<div class="t" style="left:613.4px;top:379.73px;font-size:6.95px;color:#7e7e7e;line-height:8.34px;width:36px;text-align:right;"></div>
<div class="t" style="left:655px;top:379.73px;font-size:6.95px;color:#7e7e7e;line-height:8.34px;"></div>
<div class="t" style="left:704.5px;top:379.73px;font-size:6.95px;color:#7e7e7e;line-height:8.34px;"></div>
<div class="t" style="left:755px;top:379.73px;font-size:6.95px;color:#7e7e7e;line-height:8.34px;"></div>
<div class="abs" style="left:102.5px;top:414.40000000000003px;width:797px;height:1px;background:#d2d2d2;"></div>
<div class="t" style="left:118.8px;top:398.53px;font-size:6.95px;color:#111;line-height:8.34px;">00198</div>
<div class="abs" style="left:168.2px;top:398.40000000000003px;width:8.6px;height:8.6px;background:#fff;border:1px solid #6a6fb0;"></div>
<div class="t" style="left:180.8px;top:398.53px;font-size:6.95px;color:#111;line-height:8.34px;">Pilch Markus</div>
<div class="t" style="left:318.8px;top:398.53px;font-size:6.95px;color:#111;line-height:8.34px;"></div>
<div class="t" style="left:421.2px;top:398.53px;font-size:6.95px;color:#111;line-height:8.34px;width:26.3px;text-align:center;"></div>
<div class="t" style="left:447.5px;top:398.53px;font-size:6.95px;color:#111;line-height:8.34px;width:25.3px;text-align:center;"></div>
<div class="t" style="left:475px;top:398.53px;font-size:6.95px;color:#111;line-height:8.34px;"></div>
<div class="t" style="left:535.4px;top:398.53px;font-size:6.95px;color:#111;line-height:8.34px;width:40.5px;text-align:right;"></div>
<div class="t" style="left:577.4px;top:398.53px;font-size:6.95px;color:#111;line-height:8.34px;width:36px;text-align:center;"></div>
<div class="t" style="left:613.4px;top:398.53px;font-size:6.95px;color:#111;line-height:8.34px;width:36px;text-align:right;"></div>
<div class="t" style="left:655px;top:398.53px;font-size:6.95px;color:#111;line-height:8.34px;"></div>
<div class="t" style="left:704.5px;top:398.53px;font-size:6.95px;color:#111;line-height:8.34px;"></div>
<div class="t" style="left:755px;top:398.53px;font-size:6.95px;color:#111;line-height:8.34px;"></div>
<div class="abs" style="left:102.5px;top:433.2px;width:797px;height:1px;background:#d2d2d2;"></div>
<div class="t" style="left:118.8px;top:417.33px;font-size:6.95px;color:#111;line-height:8.34px;">00199</div>
<div class="abs" style="left:168.2px;top:417.2px;width:8.6px;height:8.6px;background:#fff;border:1px solid #6a6fb0;"></div>
<div class="t" style="left:180.8px;top:417.33px;font-size:6.95px;color:#111;line-height:8.34px;">Pislcajt Klaus-Dieter</div>
<div class="t" style="left:318.8px;top:417.33px;font-size:6.95px;color:#111;line-height:8.34px;"></div>
<div class="t" style="left:421.2px;top:417.33px;font-size:6.95px;color:#111;line-height:8.34px;width:26.3px;text-align:center;"></div>
<div class="t" style="left:447.5px;top:417.33px;font-size:6.95px;color:#111;line-height:8.34px;width:25.3px;text-align:center;"></div>
<div class="t" style="left:475px;top:417.33px;font-size:6.95px;color:#111;line-height:8.34px;"></div>
<div class="t" style="left:535.4px;top:417.33px;font-size:6.95px;color:#111;line-height:8.34px;width:40.5px;text-align:right;"></div>
<div class="t" style="left:577.4px;top:417.33px;font-size:6.95px;color:#111;line-height:8.34px;width:36px;text-align:center;"></div>
<div class="t" style="left:613.4px;top:417.33px;font-size:6.95px;color:#111;line-height:8.34px;width:36px;text-align:right;"></div>
<div class="t" style="left:655px;top:417.33px;font-size:6.95px;color:#111;line-height:8.34px;"></div>
<div class="t" style="left:704.5px;top:417.33px;font-size:6.95px;color:#111;line-height:8.34px;"></div>
<div class="t" style="left:755px;top:417.33px;font-size:6.95px;color:#111;line-height:8.34px;"></div>
<div class="abs" style="left:102.5px;top:452.0px;width:797px;height:1px;background:#d2d2d2;"></div>
<div class="t" style="left:118.8px;top:436.13px;font-size:6.95px;color:#111;line-height:8.34px;">00200</div>
<div class="abs" style="left:168.2px;top:436.0px;width:8.6px;height:8.6px;background:#fff;border:1px solid #6a6fb0;"></div>
<div class="t" style="left:180.8px;top:436.13px;font-size:6.95px;color:#111;line-height:8.34px;">Polaczek Klaus-Dieter</div>
<div class="t" style="left:318.8px;top:436.13px;font-size:6.95px;color:#111;line-height:8.34px;"></div>
<div class="t" style="left:421.2px;top:436.13px;font-size:6.95px;color:#111;line-height:8.34px;width:26.3px;text-align:center;"></div>
<div class="t" style="left:447.5px;top:436.13px;font-size:6.95px;color:#111;line-height:8.34px;width:25.3px;text-align:center;"></div>
<div class="t" style="left:475px;top:436.13px;font-size:6.95px;color:#111;line-height:8.34px;"></div>
<div class="t" style="left:535.4px;top:436.13px;font-size:6.95px;color:#111;line-height:8.34px;width:40.5px;text-align:right;"></div>
<div class="t" style="left:577.4px;top:436.13px;font-size:6.95px;color:#111;line-height:8.34px;width:36px;text-align:center;"></div>
<div class="t" style="left:613.4px;top:436.13px;font-size:6.95px;color:#111;line-height:8.34px;width:36px;text-align:right;"></div>
<div class="t" style="left:655px;top:436.13px;font-size:6.95px;color:#111;line-height:8.34px;"></div>
<div class="t" style="left:704.5px;top:436.13px;font-size:6.95px;color:#111;line-height:8.34px;"></div>
<div class="t" style="left:755px;top:436.13px;font-size:6.95px;color:#111;line-height:8.34px;"></div>
<div class="abs" style="left:102.5px;top:470.8px;width:797px;height:1px;background:#d2d2d2;"></div>
<div class="t" style="left:118.8px;top:454.93px;font-size:6.95px;color:#111;line-height:8.34px;">00201</div>
<div class="abs" style="left:168.2px;top:454.8px;width:8.6px;height:8.6px;background:#fff;border:1px solid #6a6fb0;"></div>
<div class="t" style="left:180.8px;top:454.93px;font-size:6.95px;color:#111;line-height:8.34px;">Poremski Hermann-Josef</div>
<div class="t" style="left:318.8px;top:454.93px;font-size:6.95px;color:#111;line-height:8.34px;"></div>
<div class="t" style="left:421.2px;top:454.93px;font-size:6.95px;color:#111;line-height:8.34px;width:26.3px;text-align:center;"></div>
<div class="t" style="left:447.5px;top:454.93px;font-size:6.95px;color:#111;line-height:8.34px;width:25.3px;text-align:center;"></div>
<div class="t" style="left:475px;top:454.93px;font-size:6.95px;color:#111;line-height:8.34px;"></div>
<div class="t" style="left:535.4px;top:454.93px;font-size:6.95px;color:#111;line-height:8.34px;width:40.5px;text-align:right;"></div>
<div class="t" style="left:577.4px;top:454.93px;font-size:6.95px;color:#111;line-height:8.34px;width:36px;text-align:center;"></div>
<div class="t" style="left:613.4px;top:454.93px;font-size:6.95px;color:#111;line-height:8.34px;width:36px;text-align:right;"></div>
<div class="t" style="left:655px;top:454.93px;font-size:6.95px;color:#111;line-height:8.34px;"></div>
<div class="t" style="left:704.5px;top:454.93px;font-size:6.95px;color:#111;line-height:8.34px;"></div>
<div class="t" style="left:755px;top:454.93px;font-size:6.95px;color:#111;line-height:8.34px;"></div>
<div class="abs" style="left:102.5px;top:489.6px;width:797px;height:1px;background:#d2d2d2;"></div>
<div class="t" style="left:118.8px;top:473.73px;font-size:6.95px;color:#111;line-height:8.34px;">00202</div>
<div class="abs" style="left:168.2px;top:473.6px;width:8.6px;height:8.6px;background:#fff;border:1px solid #6a6fb0;"></div>
<div class="t" style="left:180.8px;top:473.73px;font-size:6.95px;color:#111;line-height:8.34px;">Präger Andreas</div>
<div class="t" style="left:318.8px;top:473.73px;font-size:6.95px;color:#111;line-height:8.34px;"></div>
<div class="t" style="left:421.2px;top:473.73px;font-size:6.95px;color:#111;line-height:8.34px;width:26.3px;text-align:center;"></div>
<div class="t" style="left:447.5px;top:473.73px;font-size:6.95px;color:#111;line-height:8.34px;width:25.3px;text-align:center;"></div>
<div class="t" style="left:475px;top:473.73px;font-size:6.95px;color:#111;line-height:8.34px;"></div>
<div class="t" style="left:535.4px;top:473.73px;font-size:6.95px;color:#111;line-height:8.34px;width:40.5px;text-align:right;"></div>
<div class="t" style="left:577.4px;top:473.73px;font-size:6.95px;color:#111;line-height:8.34px;width:36px;text-align:center;"></div>
<div class="t" style="left:613.4px;top:473.73px;font-size:6.95px;color:#111;line-height:8.34px;width:36px;text-align:right;"></div>
<div class="t" style="left:655px;top:473.73px;font-size:6.95px;color:#111;line-height:8.34px;"></div>
<div class="t" style="left:704.5px;top:473.73px;font-size:6.95px;color:#111;line-height:8.34px;"></div>
<div class="t" style="left:755px;top:473.73px;font-size:6.95px;color:#111;line-height:8.34px;"></div>
<div class="abs" style="left:102.5px;top:508.40000000000003px;width:797px;height:1px;background:#d2d2d2;"></div>
<div class="t" style="left:118.8px;top:492.53px;font-size:6.95px;color:#111;line-height:8.34px;">00203</div>
<div class="abs" style="left:168.2px;top:492.40000000000003px;width:8.6px;height:8.6px;background:#fff;border:1px solid #6a6fb0;"></div>
<div class="t" style="left:180.8px;top:492.53px;font-size:6.95px;color:#111;line-height:8.34px;">Prange Martin</div>
<div class="t" style="left:318.8px;top:492.53px;font-size:6.95px;color:#111;line-height:8.34px;"></div>
<div class="t" style="left:421.2px;top:492.53px;font-size:6.95px;color:#111;line-height:8.34px;width:26.3px;text-align:center;"></div>
<div class="t" style="left:447.5px;top:492.53px;font-size:6.95px;color:#111;line-height:8.34px;width:25.3px;text-align:center;"></div>
<div class="t" style="left:475px;top:492.53px;font-size:6.95px;color:#111;line-height:8.34px;"></div>
<div class="t" style="left:535.4px;top:492.53px;font-size:6.95px;color:#111;line-height:8.34px;width:40.5px;text-align:right;"></div>
<div class="t" style="left:577.4px;top:492.53px;font-size:6.95px;color:#111;line-height:8.34px;width:36px;text-align:center;"></div>
<div class="t" style="left:613.4px;top:492.53px;font-size:6.95px;color:#111;line-height:8.34px;width:36px;text-align:right;"></div>
<div class="t" style="left:655px;top:492.53px;font-size:6.95px;color:#111;line-height:8.34px;"></div>
<div class="t" style="left:704.5px;top:492.53px;font-size:6.95px;color:#111;line-height:8.34px;"></div>
<div class="t" style="left:755px;top:492.53px;font-size:6.95px;color:#111;line-height:8.34px;"></div>
<div class="abs" style="left:102.5px;top:519.1px;width:797px;height:1px;background:#d2d2d2;"></div>
<div class="t" style="left:118.8px;top:511.33px;font-size:6.95px;color:#111;line-height:8.34px;">00204</div>
<div class="abs" style="left:168.2px;top:511.20000000000005px;width:8.6px;height:8.6px;background:#fff;border:1px solid #6a6fb0;"></div>
<div class="t" style="left:180.8px;top:511.33px;font-size:6.95px;color:#111;line-height:8.34px;">Praski Jürgen</div>
<div class="t" style="left:318.8px;top:511.33px;font-size:6.95px;color:#111;line-height:8.34px;"></div>
<div class="t" style="left:421.2px;top:511.33px;font-size:6.95px;color:#111;line-height:8.34px;width:26.3px;text-align:center;"></div>
<div class="t" style="left:447.5px;top:511.33px;font-size:6.95px;color:#111;line-height:8.34px;width:25.3px;text-align:center;"></div>
<div class="t" style="left:475px;top:511.33px;font-size:6.95px;color:#111;line-height:8.34px;"></div>
<div class="t" style="left:535.4px;top:511.33px;font-size:6.95px;color:#111;line-height:8.34px;width:40.5px;text-align:right;"></div>
<div class="t" style="left:577.4px;top:511.33px;font-size:6.95px;color:#111;line-height:8.34px;width:36px;text-align:center;"></div>
<div class="t" style="left:613.4px;top:511.33px;font-size:6.95px;color:#111;line-height:8.34px;width:36px;text-align:right;"></div>
<div class="t" style="left:655px;top:511.33px;font-size:6.95px;color:#111;line-height:8.34px;"></div>
<div class="t" style="left:704.5px;top:511.33px;font-size:6.95px;color:#111;line-height:8.34px;"></div>
<div class="t" style="left:755px;top:511.33px;font-size:6.95px;color:#111;line-height:8.34px;"></div>
<div class="abs" style="left:102.5px;top:520.2px;width:797px;height:9.8px;background:#dbeafc;"></div>
<div class="abs" style="left:102.5px;top:519.6px;width:797px;height:0.8px;background:#d2d2d2;"></div>
<div class="abs" style="left:116.0px;top:149.5px;width:1px;height:380.5px;background:#cdcdcd;"></div>
<div class="abs" style="left:166.0px;top:149.5px;width:1px;height:380.5px;background:#cdcdcd;"></div>
<div class="abs" style="left:178.5px;top:149.5px;width:1px;height:380.5px;background:#cdcdcd;"></div>
<div class="abs" style="left:315.7px;top:149.5px;width:1px;height:380.5px;background:#cdcdcd;"></div>
<div class="abs" style="left:420.7px;top:149.5px;width:1px;height:380.5px;background:#cdcdcd;"></div>
<div class="abs" style="left:447.0px;top:149.5px;width:1px;height:380.5px;background:#cdcdcd;"></div>
<div class="abs" style="left:472.3px;top:149.5px;width:1px;height:380.5px;background:#cdcdcd;"></div>
<div class="abs" style="left:534.9px;top:149.5px;width:1px;height:380.5px;background:#cdcdcd;"></div>
<div class="abs" style="left:576.9px;top:149.5px;width:1px;height:380.5px;background:#cdcdcd;"></div>
<div class="abs" style="left:612.9px;top:149.5px;width:1px;height:380.5px;background:#cdcdcd;"></div>
<div class="abs" style="left:650.5px;top:149.5px;width:1px;height:380.5px;background:#cdcdcd;"></div>
<div class="abs" style="left:700.5px;top:149.5px;width:1px;height:380.5px;background:#cdcdcd;"></div>
<div class="abs" style="left:750.5px;top:149.5px;width:1px;height:380.5px;background:#cdcdcd;"></div>
<div class="abs" style="left:800.5px;top:149.5px;width:1px;height:380.5px;background:#cdcdcd;"></div>
<div class="t" style="left:118.8px;top:153.23px;font-size:6.95px;color:#111;line-height:8.34px;">Mitgl.Nr.</div>
<svg class="abs" style="left:182px;top:157.5px" width="5" height="3" viewBox="0 0 5 3"><path d="M0 2.6H4.4L2.2 0Z" fill="#111"/></svg>
<div class="t" style="left:188.8px;top:153.23px;font-size:6.95px;color:#111;line-height:8.34px;">Beitragszahler</div>
<div class="t" style="left:188.8px;top:161.33px;font-size:6.95px;color:#111;line-height:8.34px;">Familienmitglieder</div>
<div class="t" style="left:318.8px;top:153.23px;font-size:6.95px;color:#111;line-height:8.34px;">Abteilung</div>
<div class="t" style="left:421.2px;top:153.23px;font-size:6.95px;color:#111;line-height:8.34px;width:26.3px;text-align:center;">A/P</div>
<div class="t" style="left:447.5px;top:153.23px;font-size:6.95px;color:#111;line-height:8.34px;width:25.3px;text-align:center;">ZW</div>
<div class="t" style="left:475px;top:153.23px;font-size:6.95px;color:#111;line-height:8.34px;">Zahlungsart</div>
<div class="t" style="left:535.4px;top:153.23px;font-size:6.95px;color:#111;line-height:8.34px;width:40.5px;text-align:right;">Betrag</div>
<div class="t" style="left:577.4px;top:153.23px;font-size:6.95px;color:#111;line-height:8.34px;width:36px;text-align:center;">MStufe</div>
<div class="t" style="left:613.4px;top:152.53px;font-size:6.95px;color:#111;line-height:8.34px;width:36px;text-align:right;">Mahn-</div>
<div class="t" style="left:613.4px;top:160.83px;font-size:6.95px;color:#111;line-height:8.34px;width:36px;text-align:right;">Gebühr</div>
<div class="t" style="left:651px;top:152.53px;font-size:6.95px;color:#111;line-height:8.34px;width:50px;text-align:center;">in Mahnliste</div>
<div class="t" style="left:651px;top:160.83px;font-size:6.95px;color:#111;line-height:8.34px;width:50px;text-align:center;">seit</div>
<div class="t" style="left:701px;top:152.53px;font-size:6.95px;color:#111;line-height:8.34px;width:50px;text-align:center;">Letzte</div>
<div class="t" style="left:701px;top:160.83px;font-size:6.95px;color:#111;line-height:8.34px;width:50px;text-align:center;">Mahnung</div>
<div class="t" style="left:751px;top:152.53px;font-size:6.95px;color:#111;line-height:8.34px;width:50px;text-align:center;">nächste</div>
<div class="t" style="left:751px;top:160.83px;font-size:6.95px;color:#111;line-height:8.34px;width:50px;text-align:center;">Mahnung</div>
<div class="abs" style="left:899.5px;top:149.5px;width:11px;height:380.5px;background:#e0e0e0;"></div>
<div class="abs" style="left:899.5px;top:149.5px;width:11px;height:10px;background:#c2defc;"></div>
<svg class="abs" style="left:903px;top:153.0px" width="5" height="3" viewBox="0 0 5 3"><path d="M0 2.6H4.4L2.2 0Z" fill="#000"/></svg>
<div class="abs" style="left:899.5px;top:384px;width:11px;height:20.5px;background:#cfe2fb;"></div>
<div class="abs" style="left:899.5px;top:518.5px;width:11px;height:11.5px;background:#e8f1fd;"></div>
<svg class="abs" style="left:903px;top:523px" width="5" height="3" viewBox="0 0 5 3"><path d="M0 0H4.4L2.2 2.6Z" fill="#000"/></svg>
<div class="t" style="left:104.3px;top:542.30px;font-size:7.0px;color:#14233c;line-height:8.40px;">Angemeldeter Benutzer</div>
<div class="t" style="left:104.3px;top:552.60px;font-size:7.0px;color:#14233c;line-height:8.40px;transform:scaleX(1.0152);transform-origin:left center;">Dieter Otter (Systemadministrator)</div>
<div class="t" style="left:800px;top:541.82px;font-size:6.8px;color:#14233c;line-height:8.16px;width:110.3px;text-align:right;">© Roland Otter</div>
<div class="t" style="left:800px;top:552.62px;font-size:6.8px;color:#14233c;line-height:8.16px;width:110.3px;text-align:right;text-decoration:underline;text-decoration-thickness:0.7px;text-underline-offset:1px;">www.rosoft.de</div>
<div class="abs" style="left:14.5px;top:538.5px;width:80.5px;height:25px;background:#111;"></div>
<svg class="abs" style="left:14.5px;top:538.5px" width="80.5" height="25" viewBox="0 0 80.5 25">
<path d="M10.6 11.6 L19.7 2.9 L78.2 2.9" stroke="#f2f2f2" stroke-width="0.9" fill="none"/>
<text x="1.6" y="20" font-family="Liberation Serif, serif" font-style="italic" font-size="23" fill="#fff" stroke="#fff" stroke-width="0.35" textLength="74" lengthAdjust="spacingAndGlyphs">roSoft</text>
</svg>
<div class="abs" style="left:308.1px;top:289.6px;width:568.3px;height:313.19999999999993px;background:#6babeb;box-shadow:1.5px 1.5px 3px rgba(0,0,0,.6);"></div>
<div class="abs" style="left:312.9px;top:305.4px;width:558.8px;height:292.4px;background:#f0f0f0;border:0.6px solid #fbfbfb;"></div>
<svg class="abs" style="left:313.4px;top:292.8px" width="10" height="10" viewBox="0 0 10 10">
<path d="M0.5 3.2 H2.6 V7 H7.3 V3.2 H9.4 V9.3 H0.5Z" fill="#f2d65c" stroke="#a88a28" stroke-width="0.6"/>
<path d="M2.9 0.5 H6 L7.2 1.8 V6.6 H2.9Z" fill="#eef3fb" stroke="#7f8aa0" stroke-width="0.6"/>
</svg>
<div class="t" style="left:325.2px;top:294.18px;font-size:7.7px;color:#0c1830;line-height:9.24px;font-family:'Liberation Sans',sans-serif;transform:scaleX(0.9839);transform-origin:left center;">[ Mitgliederschriftverkehr ]</div>
<div class="abs" style="left:852.2px;top:290.4px;width:19px;height:12.2px;background:linear-gradient(#c43a26,#a81f14 50%,#8a100a);"></div>
<div class="t" style="left:852.2px;top:291.84px;font-size:8.6px;color:#fff;line-height:10.32px;font-weight:bold;font-family:'Liberation Sans',sans-serif;width:19px;text-align:center;">X</div>
<div class="abs" style="left:316.9px;top:308.7px;width:550.8px;height:16px;background:linear-gradient(90deg,#5b8de6 0%,#3a63c6 35%,#1a3390 70%,#0a145e 100%);"></div>
<div class="t" style="left:321.2px;top:313.32px;font-size:7.3px;color:#dfe7fa;line-height:8.76px;font-weight:bold;transform:scaleX(0.9716);transform-origin:left center;">00191 - Otter Roland</div>
<div class="t" style="left:760px;top:313.44px;font-size:7.1px;color:#e8eefc;line-height:8.52px;width:103.5px;text-align:right;">[ 17 Einträge ]</div>
<div class="abs" style="left:316.6px;top:328.4px;width:551.4px;height:245.60000000000002px;background:#fff;border:1px solid #333;"></div>
<div class="abs" style="left:317.6px;top:329.4px;width:549.4px;height:12.3px;background:#c2defc;"></div>
<div class="abs" style="left:317.6px;top:329.4px;width:13px;height:243.60000000000002px;background:#c8e0fc;"></div>
<div class="abs" style="left:330.5px;top:341.4px;width:536.2px;height:10.93px;background:#ffdfc0;"></div>
<svg class="abs" style="left:321.5px;top:343.3px" width="4" height="6" viewBox="0 0 4 6"><path d="M0 0L3.4 2.8L0 5.6Z" fill="#000"/></svg>
<div class="t" style="left:332.5px;top:343.16px;font-size:7.0px;color:#111;line-height:8.40px;">30.11.2014</div>
<div class="t" style="left:382.5px;top:343.16px;font-size:7.0px;color:#111;line-height:8.40px;word-spacing:0.3px;letter-spacing:0.06px;">1. Mahnung</div>
<div class="t" style="left:769.5px;top:343.16px;font-size:7.0px;color:#111;line-height:8.40px;">Mahnung</div>
<svg class="abs" style="left:844.6px;top:341.3px" width="11" height="10" viewBox="0 0 11 10">
<path d="M2.8 0.4H8.2L10.3 2.4V9.6H2.8Z" fill="#f3f3f3" stroke="#9a9a9a" stroke-width="0.6"/>
<path d="M2.8 9.6H10.3V2.4" fill="none" stroke="#6e6e6e" stroke-width="0.7"/>
<path d="M6.6 3.2 Q6.2 6 4 8.6 M5.2 4.4 Q7 6.8 9.6 7.2 M4.2 7.6 Q6.5 6.2 9 6" stroke="#e0564e" stroke-width="0.8" fill="none"/>
<rect x="0.3" y="1.1" width="6.8" height="2.7" fill="#e0131c"/>
</svg>
<div class="t" style="left:332.5px;top:355.09px;font-size:7.0px;color:#111;line-height:8.40px;">30.11.2014</div>
<div class="t" style="left:382.5px;top:355.09px;font-size:7.0px;color:#111;line-height:8.40px;word-spacing:0.3px;letter-spacing:0.06px;">Zuwendungsbestätigung 2014 59/14</div>
<div class="t" style="left:769.5px;top:355.09px;font-size:7.0px;color:#111;line-height:8.40px;">Spendenquittung</div>
<svg class="abs" style="left:844.6px;top:353.23px" width="11" height="10" viewBox="0 0 11 10">
<path d="M2.8 0.4H8.2L10.3 2.4V9.6H2.8Z" fill="#f3f3f3" stroke="#9a9a9a" stroke-width="0.6"/>
<path d="M2.8 9.6H10.3V2.4" fill="none" stroke="#6e6e6e" stroke-width="0.7"/>
<path d="M6.6 3.2 Q6.2 6 4 8.6 M5.2 4.4 Q7 6.8 9.6 7.2 M4.2 7.6 Q6.5 6.2 9 6" stroke="#e0564e" stroke-width="0.8" fill="none"/>
<rect x="0.3" y="1.1" width="6.8" height="2.7" fill="#e0131c"/>
</svg>
<div class="t" style="left:332.5px;top:367.02px;font-size:7.0px;color:#111;line-height:8.40px;">19.11.2014</div>
<div class="t" style="left:382.5px;top:367.02px;font-size:7.0px;color:#111;line-height:8.40px;word-spacing:0.3px;letter-spacing:0.06px;">Erinnerung</div>
<div class="t" style="left:769.5px;top:367.02px;font-size:7.0px;color:#111;line-height:8.40px;">Brief</div>
<svg class="abs" style="left:844.6px;top:365.16px" width="11" height="10" viewBox="0 0 11 10">
<path d="M2.8 0.4H8.2L10.3 2.4V9.6H2.8Z" fill="#f3f3f3" stroke="#9a9a9a" stroke-width="0.6"/>
<path d="M2.8 9.6H10.3V2.4" fill="none" stroke="#6e6e6e" stroke-width="0.7"/>
<path d="M6.6 3.2 Q6.2 6 4 8.6 M5.2 4.4 Q7 6.8 9.6 7.2 M4.2 7.6 Q6.5 6.2 9 6" stroke="#e0564e" stroke-width="0.8" fill="none"/>
<rect x="0.3" y="1.1" width="6.8" height="2.7" fill="#e0131c"/>
</svg>
<div class="t" style="left:332.5px;top:378.95px;font-size:7.0px;color:#111;line-height:8.40px;">25.01.2014</div>
<div class="t" style="left:382.5px;top:378.95px;font-size:7.0px;color:#111;line-height:8.40px;word-spacing:0.3px;letter-spacing:0.06px;">roSoft Vereinsprofi 5.0 (Vorabversion-3)</div>
<div class="t" style="left:769.5px;top:378.95px;font-size:7.0px;color:#111;line-height:8.40px;">E-Mail</div>
<div class="t" style="left:332.5px;top:390.88px;font-size:7.0px;color:#111;line-height:8.40px;">24.01.2014</div>
<div class="t" style="left:382.5px;top:390.88px;font-size:7.0px;color:#111;line-height:8.40px;word-spacing:0.3px;letter-spacing:0.06px;">Spende 12/14</div>
<div class="t" style="left:769.5px;top:390.88px;font-size:7.0px;color:#111;line-height:8.40px;">Spendenquittung</div>
<div class="t" style="left:332.5px;top:402.81px;font-size:7.0px;color:#111;line-height:8.40px;">24.01.2014</div>
<div class="t" style="left:382.5px;top:402.81px;font-size:7.0px;color:#111;line-height:8.40px;word-spacing:0.3px;letter-spacing:0.06px;">Spendenquittung 11/14</div>
<div class="t" style="left:769.5px;top:402.81px;font-size:7.0px;color:#111;line-height:8.40px;">Spendenquittung</div>
<svg class="abs" style="left:844.6px;top:400.95px" width="11" height="10" viewBox="0 0 11 10">
<path d="M2.8 0.4H8.2L10.3 2.4V9.6H2.8Z" fill="#f3f3f3" stroke="#9a9a9a" stroke-width="0.6"/>
<path d="M2.8 9.6H10.3V2.4" fill="none" stroke="#6e6e6e" stroke-width="0.7"/>
<path d="M6.6 3.2 Q6.2 6 4 8.6 M5.2 4.4 Q7 6.8 9.6 7.2 M4.2 7.6 Q6.5 6.2 9 6" stroke="#e0564e" stroke-width="0.8" fill="none"/>
<rect x="0.3" y="1.1" width="6.8" height="2.7" fill="#e0131c"/>
</svg>
<div class="t" style="left:332.5px;top:414.74px;font-size:7.0px;color:#111;line-height:8.40px;">24.01.2014</div>
<div class="t" style="left:382.5px;top:414.74px;font-size:7.0px;color:#111;line-height:8.40px;word-spacing:0.3px;letter-spacing:0.06px;">Spendenquittung 10/14</div>
<div class="t" style="left:769.5px;top:414.74px;font-size:7.0px;color:#111;line-height:8.40px;">Spendenquittung</div>
<div class="t" style="left:332.5px;top:426.67px;font-size:7.0px;color:#111;line-height:8.40px;">15.01.2014</div>
<div class="t" style="left:382.5px;top:426.67px;font-size:7.0px;color:#111;line-height:8.40px;word-spacing:0.3px;letter-spacing:0.06px;">roSoft Vereinsprofi 5.0 - Datensicherung</div>
<div class="t" style="left:769.5px;top:426.67px;font-size:7.0px;color:#111;line-height:8.40px;">Brief</div>
<svg class="abs" style="left:844.6px;top:424.81px" width="11" height="10" viewBox="0 0 11 10">
<path d="M2.8 0.4H8.2L10.3 2.4V9.6H2.8Z" fill="#f3f3f3" stroke="#9a9a9a" stroke-width="0.6"/>
<path d="M2.8 9.6H10.3V2.4" fill="none" stroke="#6e6e6e" stroke-width="0.7"/>
<path d="M6.6 3.2 Q6.2 6 4 8.6 M5.2 4.4 Q7 6.8 9.6 7.2 M4.2 7.6 Q6.5 6.2 9 6" stroke="#e0564e" stroke-width="0.8" fill="none"/>
<rect x="0.3" y="1.1" width="6.8" height="2.7" fill="#e0131c"/>
</svg>
<div class="t" style="left:332.5px;top:438.60px;font-size:7.0px;color:#111;line-height:8.40px;">14.01.2014</div>
<div class="t" style="left:382.5px;top:438.60px;font-size:7.0px;color:#111;line-height:8.40px;word-spacing:0.3px;letter-spacing:0.06px;">roSoft Vereinsprofi 5.0 (Vorabversion-2)</div>
<div class="t" style="left:769.5px;top:438.60px;font-size:7.0px;color:#111;line-height:8.40px;">E-Mail</div>
<div class="t" style="left:332.5px;top:450.53px;font-size:7.0px;color:#111;line-height:8.40px;">30.12.2013</div>
<div class="t" style="left:382.5px;top:450.53px;font-size:7.0px;color:#111;line-height:8.40px;word-spacing:0.3px;letter-spacing:0.06px;">Neujahrswünsche</div>
<div class="t" style="left:769.5px;top:450.53px;font-size:7.0px;color:#111;line-height:8.40px;">Kurzbrief</div>
<svg class="abs" style="left:844.6px;top:449.87px" width="11" height="9" viewBox="0 0 11 9">
<rect x="0.4" y="0.4" width="10.2" height="8.2" fill="#e6e6e6" stroke="#b4b4b4" stroke-width="0.7"/>
<rect x="1.2" y="1.2" width="8.6" height="6.2" fill="#6fb6ea"/>
<path d="M4 3 Q6.5 1.6 9.8 3.4 V4.6 H4Z" fill="#e8f4fc"/>
<path d="M1.2 4.2 Q4 3.6 6 5 L9.8 4.8 V7.4 H1.2Z" fill="#1f6a58"/>
<path d="M1.2 6.6 H9.8 V7.4 H1.2Z" fill="#5aa0c8"/>
</svg>
<div class="t" style="left:332.5px;top:462.46px;font-size:7.0px;color:#111;line-height:8.40px;">29.12.2013</div>
<div class="t" style="left:382.5px;top:462.46px;font-size:7.0px;color:#111;line-height:8.40px;word-spacing:0.3px;letter-spacing:0.06px;">Info an Vorstandschaft</div>
<div class="t" style="left:769.5px;top:462.46px;font-size:7.0px;color:#111;line-height:8.40px;">E-Mail</div>
<div class="t" style="left:332.5px;top:474.39px;font-size:7.0px;color:#111;line-height:8.40px;">29.12.2013</div>
<div class="t" style="left:382.5px;top:474.39px;font-size:7.0px;color:#111;line-height:8.40px;word-spacing:0.3px;letter-spacing:0.06px;">Einladung</div>
<div class="t" style="left:769.5px;top:474.39px;font-size:7.0px;color:#111;line-height:8.40px;">Kurzbrief</div>
<svg class="abs" style="left:844.6px;top:472.13px" width="11" height="10.4" viewBox="0 0 11 10.4">
<path d="M2.8 1.6H8.4L10.3 3.4V10H2.8Z" fill="#dfe8f8" stroke="#3560c6" stroke-opacity="0.75" stroke-width="0.8"/>
<rect x="0.3" y="0.4" width="6.8" height="6.6" fill="#3560c6"/>
<rect x="1.5" y="1.6" width="4.4" height="4" fill="#6f93e2"/>
<path d="M2.2 2.7H5.2M2.2 3.7H5.2M2.2 4.7H5.2" stroke="#e8eefc" stroke-width="0.5"/>
</svg>
<div class="t" style="left:332.5px;top:486.32px;font-size:7.0px;color:#111;line-height:8.40px;">21.12.2013</div>
<div class="t" style="left:382.5px;top:486.32px;font-size:7.0px;color:#111;line-height:8.40px;word-spacing:0.3px;letter-spacing:0.06px;">roSoft Vereinsprofi 5.0 (Vorabversion-1)</div>
<div class="t" style="left:769.5px;top:486.32px;font-size:7.0px;color:#111;line-height:8.40px;">E-Mail</div>
<div class="t" style="left:332.5px;top:498.25px;font-size:7.0px;color:#111;line-height:8.40px;">20.12.2013</div>
<div class="t" style="left:382.5px;top:498.25px;font-size:7.0px;color:#111;line-height:8.40px;word-spacing:0.3px;letter-spacing:0.06px;">roSoft_wuenscht_Frohe_Weihnachten_2013</div>
<div class="t" style="left:769.5px;top:498.25px;font-size:7.0px;color:#111;line-height:8.40px;">E-Mail</div>
<div class="t" style="left:332.5px;top:510.19px;font-size:7.0px;color:#111;line-height:8.40px;">13.12.2013</div>
<div class="t" style="left:382.5px;top:510.19px;font-size:7.0px;color:#111;line-height:8.40px;word-spacing:0.3px;letter-spacing:0.06px;">roSoft Vereinsprofi 5.0 (Vorabversion-0)</div>
<div class="t" style="left:769.5px;top:510.19px;font-size:7.0px;color:#111;line-height:8.40px;">E-Mail</div>
<div class="t" style="left:332.5px;top:522.12px;font-size:7.0px;color:#111;line-height:8.40px;">04.11.2013</div>
<div class="t" style="left:382.5px;top:522.12px;font-size:7.0px;color:#111;line-height:8.40px;word-spacing:0.3px;letter-spacing:0.06px;">roSoft Vereinsprofi 5.0 (Info und Preisliste Stand: 01.11.2013)</div>
<div class="t" style="left:769.5px;top:522.12px;font-size:7.0px;color:#111;line-height:8.40px;"></div>
<svg class="abs" style="left:844.6px;top:519.85px" width="11" height="10.4" viewBox="0 0 11 10.4">
<path d="M2.8 1.6H8.4L10.3 3.4V10H2.8Z" fill="#e2f4e4" stroke="#2f9a45" stroke-opacity="0.75" stroke-width="0.8"/>
<rect x="0.3" y="0.4" width="6.8" height="6.6" fill="#2f9a45"/>
<rect x="1.5" y="1.6" width="4.4" height="4" fill="#6cc47c"/>
<path d="M2.2 2.7H5.2M2.2 3.7H5.2M2.2 4.7H5.2" stroke="#e8eefc" stroke-width="0.5"/>
</svg>
<div class="t" style="left:332.5px;top:534.04px;font-size:7.0px;color:#111;line-height:8.40px;">15.06.2001</div>
<div class="t" style="left:382.5px;top:534.04px;font-size:7.0px;color:#111;line-height:8.40px;word-spacing:0.3px;letter-spacing:0.06px;">Beitragsumstellung - EURO</div>
<div class="t" style="left:769.5px;top:534.04px;font-size:7.0px;color:#111;line-height:8.40px;">Brief</div>
<svg class="abs" style="left:844.6px;top:531.78px" width="11" height="10.4" viewBox="0 0 11 10.4">
<path d="M2.8 1.6H8.4L10.3 3.4V10H2.8Z" fill="#dfe8f8" stroke="#3560c6" stroke-opacity="0.75" stroke-width="0.8"/>
<rect x="0.3" y="0.4" width="6.8" height="6.6" fill="#3560c6"/>
<rect x="1.5" y="1.6" width="4.4" height="4" fill="#6f93e2"/>
<path d="M2.2 2.7H5.2M2.2 3.7H5.2M2.2 4.7H5.2" stroke="#e8eefc" stroke-width="0.5"/>
</svg>
<div class="abs" style="left:317.6px;top:340.1px;width:13px;height:0.8px;background:#a9b4c4;"></div>
<div class="abs" style="left:317.6px;top:352.03000000000003px;width:13px;height:0.8px;background:#a9b4c4;"></div>
<div class="abs" style="left:317.6px;top:363.96000000000004px;width:13px;height:0.8px;background:#a9b4c4;"></div>
<div class="abs" style="left:317.6px;top:375.89000000000004px;width:13px;height:0.8px;background:#a9b4c4;"></div>
<div class="abs" style="left:317.6px;top:387.82000000000005px;width:13px;height:0.8px;background:#a9b4c4;"></div>
<div class="abs" style="left:317.6px;top:399.75px;width:13px;height:0.8px;background:#a9b4c4;"></div>
<div class="abs" style="left:317.6px;top:411.68px;width:13px;height:0.8px;background:#a9b4c4;"></div>
<div class="abs" style="left:317.6px;top:423.61px;width:13px;height:0.8px;background:#a9b4c4;"></div>
<div class="abs" style="left:317.6px;top:435.54px;width:13px;height:0.8px;background:#a9b4c4;"></div>
<div class="abs" style="left:317.6px;top:447.47px;width:13px;height:0.8px;background:#a9b4c4;"></div>
<div class="abs" style="left:317.6px;top:459.40000000000003px;width:13px;height:0.8px;background:#a9b4c4;"></div>
<div class="abs" style="left:317.6px;top:471.33000000000004px;width:13px;height:0.8px;background:#a9b4c4;"></div>
<div class="abs" style="left:317.6px;top:483.26px;width:13px;height:0.8px;background:#a9b4c4;"></div>
<div class="abs" style="left:317.6px;top:495.19000000000005px;width:13px;height:0.8px;background:#a9b4c4;"></div>
<div class="abs" style="left:317.6px;top:507.12px;width:13px;height:0.8px;background:#a9b4c4;"></div>
<div class="abs" style="left:317.6px;top:519.0500000000001px;width:13px;height:0.8px;background:#a9b4c4;"></div>
<div class="abs" style="left:317.6px;top:530.98px;width:13px;height:0.8px;background:#a9b4c4;"></div>
<div class="abs" style="left:317.6px;top:542.91px;width:13px;height:0.8px;background:#a9b4c4;"></div>
<div class="abs" style="left:317.6px;top:554.84px;width:13px;height:0.8px;background:#a9b4c4;"></div>
<div class="abs" style="left:317.6px;top:566.77px;width:13px;height:0.8px;background:#a9b4c4;"></div>
<div class="abs" style="left:330.0px;top:329.4px;width:1px;height:243.60000000000002px;background:#c4c4c4;"></div>
<div class="abs" style="left:380.2px;top:329.4px;width:1px;height:243.60000000000002px;background:#c4c4c4;"></div>
<div class="abs" style="left:767.8px;top:329.4px;width:1px;height:243.60000000000002px;background:#c4c4c4;"></div>
<div class="abs" style="left:842.8px;top:329.4px;width:1px;height:243.60000000000002px;background:#c4c4c4;"></div>
<div class="abs" style="left:855.8px;top:329.4px;width:1px;height:243.60000000000002px;background:#c4c4c4;"></div>
<div class="t" style="left:332.5px;top:331.90px;font-size:7.0px;color:#111;line-height:8.40px;">Datum</div>
<div class="t" style="left:382.5px;top:331.90px;font-size:7.0px;color:#111;line-height:8.40px;">Vermerk</div>
<div class="t" style="left:769.5px;top:331.90px;font-size:7.0px;color:#111;line-height:8.40px;">Art</div>
<div class="abs" style="left:316.9px;top:579.8px;width:67.30000000000001px;height:14.6px;background:linear-gradient(#f3f3f3,#e9e9e9 50%,#e0e0e0);border:1px solid #9c9c9c;"></div>
<div class="t" style="left:317.4px;top:584.30px;font-size:7.0px;color:#111;line-height:8.40px;width:66.30000000000001px;text-align:center;">Anzeigen</div>
<div class="abs" style="left:387.2px;top:579.8px;width:15.300000000000011px;height:14.6px;background:linear-gradient(#f3f3f3,#e9e9e9 50%,#e0e0e0);border:1px solid #9c9c9c;"></div>
<svg class="abs" style="left:392.7px;top:586px" width="5" height="3" viewBox="0 0 5 3"><path d="M0 2.6H4.4L2.2 0Z" fill="#8a8a8a"/></svg>
<div class="abs" style="left:405.3px;top:579.8px;width:14.399999999999977px;height:14.6px;background:linear-gradient(#f3f3f3,#e9e9e9 50%,#e0e0e0);border:1px solid #9c9c9c;"></div>
<svg class="abs" style="left:410.2px;top:586.3px" width="5" height="3" viewBox="0 0 5 3"><path d="M0 0H4.4L2.2 2.6Z" fill="#2c58c8"/></svg>
<div class="abs" style="left:422.4px;top:579.8px;width:66.60000000000002px;height:14.6px;background:linear-gradient(#f3f3f3,#e9e9e9 50%,#e0e0e0);border:1px solid #9c9c9c;"></div>
<div class="t" style="left:422.9px;top:584.30px;font-size:7.0px;color:#111;line-height:8.40px;width:65.60000000000002px;text-align:center;">Hinzufügen</div>
<div class="abs" style="left:492.7px;top:579.8px;width:66.30000000000001px;height:14.6px;background:linear-gradient(#f3f3f3,#e9e9e9 50%,#e0e0e0);border:1px solid #9c9c9c;"></div>
<div class="t" style="left:493.2px;top:584.30px;font-size:7.0px;color:#111;line-height:8.40px;width:65.30000000000001px;text-align:center;">Bearbeiten</div>
<div class="abs" style="left:562.5px;top:579.8px;width:66.79999999999995px;height:14.6px;background:linear-gradient(#f3f3f3,#e9e9e9 50%,#e0e0e0);border:1px solid #9c9c9c;"></div>
<div class="t" style="left:563px;top:584.30px;font-size:7.0px;color:#111;line-height:8.40px;width:65.79999999999995px;text-align:center;">Löschen</div>
<div class="abs" style="left:729.5px;top:579.8px;width:66.70000000000005px;height:14.6px;background:linear-gradient(#f3f3f3,#e9e9e9 50%,#e0e0e0);border:1px solid #9c9c9c;"></div>
<div class="t" style="left:730px;top:584.30px;font-size:7.0px;color:#111;line-height:8.40px;width:65.70000000000005px;text-align:center;">Drucken</div>
<div class="abs" style="left:799.9px;top:579.8px;width:67.30000000000007px;height:14.6px;background:linear-gradient(#f3f3f3,#e9e9e9 50%,#e0e0e0);border:1px solid #9c9c9c;"></div>
<div class="t" style="left:800.4px;top:584.30px;font-size:7.0px;color:#111;line-height:8.40px;width:66.30000000000007px;text-align:center;">Schließen</div>
</body></html>
